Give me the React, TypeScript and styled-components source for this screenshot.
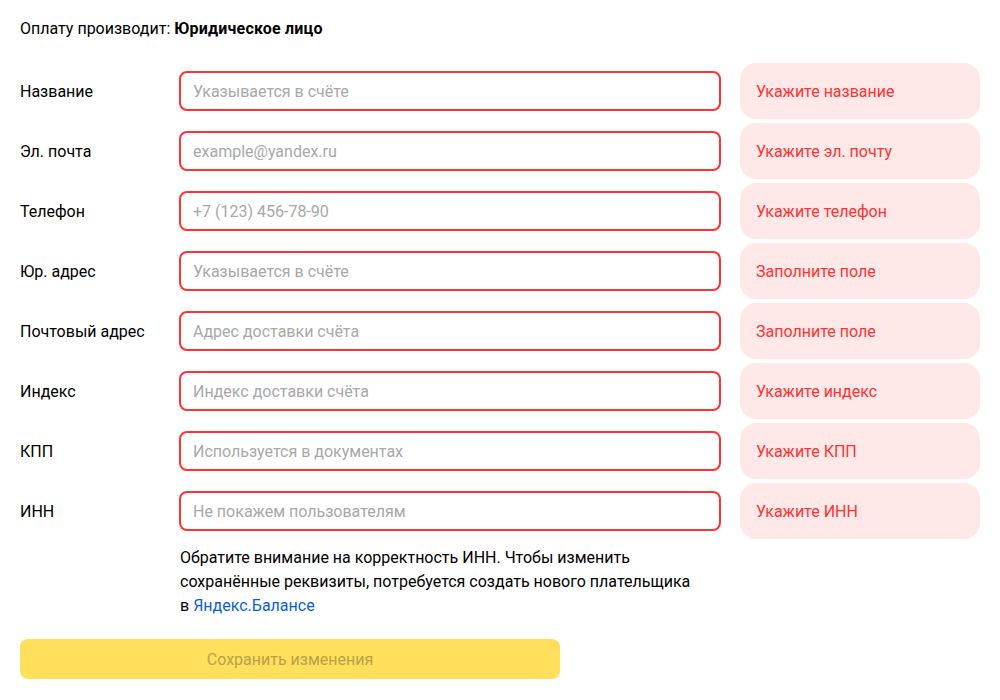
import * as React from 'react';
import styled, { createGlobalStyle } from 'styled-components';

type Field = {
  label: string,
  placeholder: string,
  error: string,
};

const fields: Field[] = [
  { label: 'Название', placeholder: 'Указывается в счёте', error: 'Укажите название' },
  { label: 'Эл. почта', placeholder: 'example@yandex.ru', error: 'Укажите эл. почту' },
  { label: 'Телефон', placeholder: '+7 (123) 456-78-90', error: 'Укажите телефон' },
  { label: 'Юр. адрес', placeholder: 'Указывается в счёте', error: 'Заполните поле' },
  { label: 'Почтовый адрес', placeholder: 'Адрес доставки счёта', error: 'Заполните поле' },
  { label: 'Индекс', placeholder: 'Индекс доставки счёта', error: 'Укажите индекс' },
  { label: 'КПП', placeholder: 'Используется в документах', error: 'Укажите КПП' },
  { label: 'ИНН', placeholder: 'Не покажем пользователям', error: 'Укажите ИНН' },
];

const GlobalStyle = createGlobalStyle`
  body {
    margin: 0;
    background: #fff;
    font-family: Roboto, "Noto Sans", sans-serif;
    color: #000;
  }
`;

export default function App() {
  return (
    <Page>
      <GlobalStyle />
      <Payer>Оплату производит: <b>Юридическое лицо</b></Payer>
      <Rows>
        {fields.map((field) => (
          <Row key={field.label}>
            <Label>{field.label}</Label>
            <Input placeholder={field.placeholder} />
            <Tip>{field.error}</Tip>
          </Row>
        ))}
      </Rows>
      <Note>
        Обратите внимание на корректность ИНН. Чтобы изменить сохранённые реквизиты, потребуется создать нового плательщика <NoWrap>в <Link href="#">Яндекс.Балансе</Link></NoWrap>
      </Note>
      <SaveButton disabled>Сохранить изменения</SaveButton>
    </Page>
  );
}

const Page = styled.div`
  padding: 19px 20px 20px 20px;
  width: 960px;
  font-size: 16px;
`;

const Payer = styled.div`
  line-height: 20px;
  margin-bottom: 24px;
  b {
    font-weight: 700;
    letter-spacing: 0.2px;
  }
`;

const Rows = styled.div`
  display: flex;
  flex-direction: column;
  gap: 4px;
`;

const Row = styled.div`
  display: grid;
  grid-template-columns: 159px 542px 259px;
  align-items: center;
  height: 56px;
`;

const Label = styled.span`
  line-height: 20px;
  padding-top: 2px;
`;

const Input = styled.input`
  box-sizing: border-box;
  height: 40px;
  width: 542px;
  border: 2px solid #ff3333;
  border-radius: 8px;
  padding: 0 12px;
  font: inherit;
  font-size: 16px;
  outline: none;
  &::placeholder {
    color: #a8a8a8;
  }
`;

const Tip = styled.div`
  box-sizing: border-box;
  height: 56px;
  width: 240px;
  margin-left: 19px;
  display: flex;
  align-items: center;
  padding: 0 16px;
  border-radius: 16px;
  background: #ffe8e8;
  color: #f33;
`;

const Note = styled.p`
  margin: 7px 0 0 160px;
  width: 540px;
  line-height: 24px;
`;

const NoWrap = styled.span`
  white-space: nowrap;
`;

const Link = styled.a`
  color: #0a5fd6;
  text-decoration: none;
`;

const SaveButton = styled.button`
  display: block;
  margin-top: 21px;
  width: 540px;
  height: 40px;
  border: none;
  border-radius: 8px;
  background: #ffdf5b;
  color: #b9a14a;
  font: inherit;
  font-size: 16px;
`;
